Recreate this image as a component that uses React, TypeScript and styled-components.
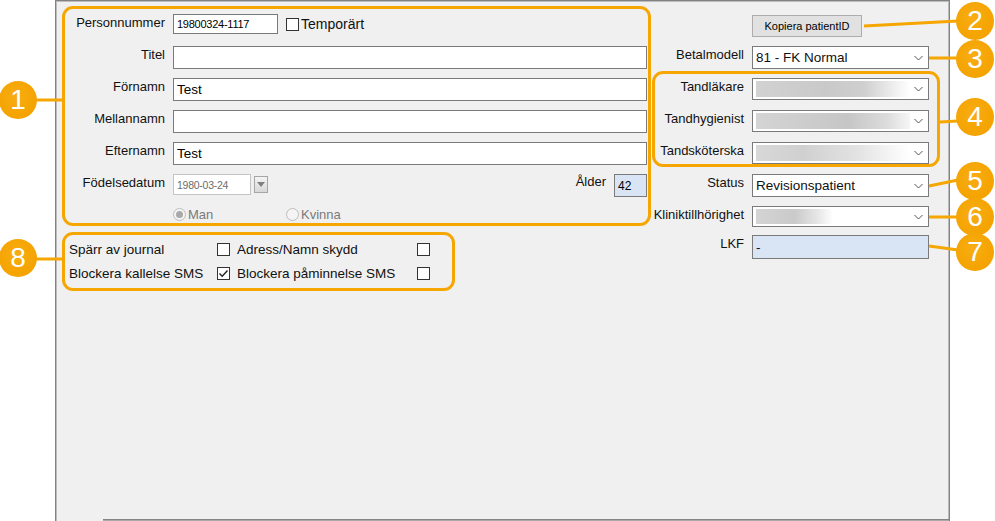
import React from "react";
import styled, { createGlobalStyle } from "styled-components";

/* ─── Global ─────────────────────────────────────────── */
const GlobalStyle = createGlobalStyle`
  html, body { margin: 0; padding: 0; background: #fff; }
  body {
    font-family: "Liberation Sans", Arial, sans-serif;
    color: #111;
  }
  * { box-sizing: border-box; }
`;

const ORANGE = "#f6a600";

/* ─── Layout ─────────────────────────────────────────── */
const Page = styled.div`
  position: relative;
  width: 995px;
  height: 521px;
  overflow: hidden;
  padding-left: 55px;
`;

const Panel = styled.div`
  width: 895px;
  height: 521px;
  display: flex;
  flex-direction: column;
  background: #f0f0f0;
  border: 1px solid #828282;
  border-bottom: none;
  box-shadow: inset 1px 1px 0 #bcbcbc, inset -1px 0 0 #bcbcbc;
  padding: 5px 0 0 6px;
`;

const Columns = styled.div`
  display: flex;
  align-items: flex-start;
`;

const Spacer = styled.div`
  flex: 1;
`;

const BottomEdge = styled.div`
  height: 2px;
  margin-left: 41px;
  background: #858585;
  border-bottom: 1px solid #a8a8a8;
`;

const LeftCol = styled.div`
  width: 589px;
  display: flex;
  flex-direction: column;
  gap: 6px;
`;

const RightCol = styled.div`
  width: 298px;
  display: flex;
  flex-direction: column;
`;

/* ─── Orange groups ──────────────────────────────────── */
const Group = styled.div`
  border: 3px solid ${ORANGE};
  border-radius: 11px;
`;

const PersonGroup = styled(Group)`
  height: 220px;
  display: grid;
  grid-template-columns: 100px 1fr;
  grid-template-rows: repeat(6, 23px) 16px;
  column-gap: 8px;
  row-gap: 9px;
  padding: 5px 1px 1px 0;
`;

const FlagGroup = styled(Group)`
  width: 393px;
  height: 59px;
  display: grid;
  grid-template-columns: 141px 13px 173px 13px;
  grid-template-rows: 17px 17px;
  column-gap: 7px;
  row-gap: 7px;
  align-items: center;
  padding: 6px 0 0 4px;
  font-size: 13.5px;
  line-height: 17px;
`;

const StaffGroup = styled(Group)`
  margin: 2px 9px 0 1px;
  padding-top: 4px;
  display: flex;
  flex-direction: column;
  gap: 10px;
  height: 96px;
`;

/* ─── Fields ─────────────────────────────────────────── */
const Label = styled.div`
  display: flex;
  justify-content: flex-end;
  white-space: nowrap;
  font-size: 13px;
  line-height: 16px;
  padding-top: 1px;
`;

const FieldRow = styled.div`
  display: flex;
  align-items: flex-start;
  gap: 8px;
`;

const TextBox = styled.div<{ $w?: number; $h?: number; $bg?: string; $size?: number; $muted?: boolean }>`
  width: ${(p) => (p.$w ? `${p.$w}px` : "100%")};
  height: ${(p) => p.$h ?? 23}px;
  display: flex;
  align-items: center;
  padding-left: 3px;
  background: ${(p) => p.$bg ?? "#fff"};
  border: 1px solid ${(p) => (p.$muted ? "#c4c4c4" : "#7a7a7a")};
  color: ${(p) => (p.$muted ? "#6d6d6d" : "#000")};
  font-size: ${(p) => p.$size ?? 13.5}px;
  letter-spacing: ${(p) => ((p.$size ?? 13.5) < 12 ? "-0.25px" : "0")};
  white-space: nowrap;
`;

const CheckBox = styled.div`
  width: 13px;
  height: 13px;
  flex: none;
  background: #fff;
  border: 1px solid #333;
  display: flex;
  align-items: center;
  justify-content: center;
`;

const CheckLabel = styled.span<{ $size?: number }>`
  font-size: ${(p) => p.$size ?? 13.5}px;
  white-space: nowrap;
`;

const InlineRow = styled.div<{ $h: number }>`
  height: ${(p) => p.$h}px;
  display: flex;
  align-items: center;
`;

const DateButton = styled.div`
  width: 14px;
  height: 17px;
  margin: 2px 0 0 3px;
  border: 1px solid #a6a6a6;
  background: linear-gradient(#f4f4f4, #d8d8d8);
  display: flex;
  align-items: center;
  justify-content: center;

  &::after {
    content: "";
    border-left: 4px solid transparent;
    border-right: 4px solid transparent;
    border-top: 5px solid #808080;
  }
`;

const AgeWrap = styled.div`
  margin-left: auto;
  display: flex;
  gap: 8px;
  align-items: flex-start;
  font-size: 13px;
  line-height: 16px;
`;

const RadioGroup = styled.div`
  display: grid;
  grid-template-columns: 113px auto;
  align-items: center;
`;

const RadioOption = styled.div`
  display: flex;
  align-items: center;
  gap: 2px;
  color: #7a7a7a;
  font-size: 13px;
`;

const RadioDot = styled.div<{ $on?: boolean }>`
  width: 13px;
  height: 13px;
  border-radius: 50%;
  border: 1px solid #bdbdbd;
  background: #f4f4f4;
  display: flex;
  align-items: center;
  justify-content: center;

  &::after {
    content: "";
    width: 7px;
    height: 7px;
    border-radius: 50%;
    background: ${(p) => (p.$on ? "#a9a9a9" : "transparent")};
  }
`;

/* ─── Right column ───────────────────────────────────── */
const FormRow = styled.div<{ $mt?: number; $pr?: number; $h?: number }>`
  display: grid;
  grid-template-columns: minmax(0, 1fr) 177px;
  column-gap: 8px;
  margin-top: ${(p) => p.$mt ?? 0}px;
  padding-right: ${(p) => p.$pr ?? 20}px;
  height: ${(p) => p.$h ?? 23}px;
`;

const CopyButton = styled.button`
  width: 110px;
  height: 22px;
  padding: 0;
  border: 1px solid #adadad;
  background: #e1e1e1;
  font-family: inherit;
  font-size: 11px;
  color: #000;
`;

const Select = styled.div<{ $bg?: string }>`
  height: 100%;
  display: flex;
  align-items: center;
  padding-left: 3px;
  background: ${(p) => p.$bg ?? "#fff"};
  border: 1px solid #7a7a7a;
  font-size: 13.5px;
  white-space: nowrap;
`;

const SelectValue = styled.span`
  flex: 1;
`;

const Blurred = styled.div<{ $fade: string }>`
  flex: 1;
  align-self: stretch;
  margin: 2px 4px 2px 0;
  background: ${(p) => p.$fade};
`;

const Chevron = () => (
  <svg width="9" height="6" viewBox="0 0 9 6" style={{ marginRight: 5, flex: "none" }}>
    <path d="M0.5 1 L4.5 5 L8.5 1" fill="none" stroke="#555" strokeWidth="1" />
  </svg>
);

const Tick = () => (
  <svg width="11" height="11" viewBox="0 0 11 11">
    <path d="M1.5 5.5 L4.2 8.2 L9.5 2.5" fill="none" stroke="#222" strokeWidth="1.4" />
  </svg>
);

/* ─── Callouts ───────────────────────────────────────── */
const Overlay = styled.svg`
  position: absolute;
  left: 0;
  top: 0;
  pointer-events: none;
`;

const Badge = styled.div<{ $x: number; $y: number }>`
  position: absolute;
  left: ${(p) => p.$x - 19}px;
  top: ${(p) => p.$y - 19}px;
  width: 38px;
  height: 38px;
  border-radius: 50%;
  background: radial-gradient(circle at 45% 40%, #f8ad12 0%, #f4a300 70%, #ee9c00 100%);
  color: #fff;
  font-size: 28px;
  line-height: 1;
  display: flex;
  align-items: center;
  justify-content: center;
`;

const leaders = [
  [36, 100, 62, 100],
  [36, 259, 62, 259],
  [864, 26, 958, 21],
  [929, 58, 958, 58],
  [940, 122, 958, 121],
  [929, 186, 958, 180],
  [929, 217, 958, 217],
  [929, 246, 958, 250],
];

const badges = [
  { n: 1, x: 18, y: 100 },
  { n: 8, x: 18, y: 258 },
  { n: 2, x: 975, y: 21 },
  { n: 3, x: 975, y: 59 },
  { n: 4, x: 975, y: 117 },
  { n: 5, x: 975, y: 181 },
  { n: 6, x: 975, y: 217 },
  { n: 7, x: 975, y: 252 },
];

const staff = [
  { label: "Tandläkare", fade: "linear-gradient(90deg, #d2d2d2 0%, #c9c9c9 45%, #cfcfcf 70%, #fff 100%)" },
  { label: "Tandhygienist", fade: "linear-gradient(90deg, #d4d4d4 0%, #cbcbcb 40%, #c6c6c6 60%, #dcdcdc 85%, #f6f6f6 100%)" },
  { label: "Tandsköterska", fade: "linear-gradient(90deg, #d8d8d8 0%, #d0d0d0 30%, #e2e2e2 65%, #fff 100%)" },
];

export default function App() {
  return (
    <Page>
      <GlobalStyle />
      <Panel>
        <Columns>
          <LeftCol>
            <PersonGroup>
              <Label>Personnummer</Label>
              <InlineRow $h={20}>
                <TextBox $w={105} $h={20} $size={11}>19800324-1117</TextBox>
                <CheckBox style={{ marginLeft: 8 }} />
                <CheckLabel $size={14} style={{ marginLeft: 2 }}>Temporärt</CheckLabel>
              </InlineRow>

              <Label>Titel</Label>
              <TextBox />

              <Label>Förnamn</Label>
              <TextBox>Test</TextBox>

              <Label>Mellannamn</Label>
              <TextBox />

              <Label>Efternamn</Label>
              <TextBox>Test</TextBox>

              <Label>Födelsedatum</Label>
              <FieldRow style={{ gap: 0 }}>
                <TextBox $w={78} $h={21} $size={10.5} $muted>1980-03-24</TextBox>
                <DateButton />
                <AgeWrap>
                  <span>Ålder</span>
                  <TextBox $w={33} $bg="#d9e5f5" $size={12}>42</TextBox>
                </AgeWrap>
              </FieldRow>

              <span />
              <RadioGroup>
                <RadioOption>
                  <RadioDot $on />
                  Man
                </RadioOption>
                <RadioOption>
                  <RadioDot />
                  Kvinna
                </RadioOption>
              </RadioGroup>
            </PersonGroup>

            <FlagGroup>
              <span>Spärr av journal</span>
              <CheckBox />
              <span>Adress/Namn skydd</span>
              <CheckBox />
              <span>Blockera kallelse SMS</span>
              <CheckBox>
                <Tick />
              </CheckBox>
              <span>Blockera påminnelse SMS</span>
              <CheckBox />
            </FlagGroup>
          </LeftCol>

          <RightCol>
            <FormRow $mt={9} $h={22}>
              <span />
              <CopyButton>Kopiera patientID</CopyButton>
            </FormRow>

            <FormRow $mt={9}>
              <Label>Betalmodell</Label>
              <Select>
                <SelectValue>81 - FK Normal</SelectValue>
                <Chevron />
              </Select>
            </FormRow>

            <StaffGroup>
              {staff.map((s) => (
                <FormRow key={s.label} $pr={8} $h={22}>
                  <Label>{s.label}</Label>
                  <Select>
                    <Blurred $fade={s.fade} />
                    <Chevron />
                  </Select>
                </FormRow>
              ))}
            </StaffGroup>

            <FormRow $mt={7}>
              <Label>Status</Label>
              <Select>
                <SelectValue>Revisionspatient</SelectValue>
                <Chevron />
              </Select>
            </FormRow>

            <FormRow $mt={9} $h={21}>
              <Label>Kliniktillhörighet</Label>
              <Select>
                <Blurred $fade="linear-gradient(90deg, #d4d4d4 0%, #cacaca 25%, #e6e6e6 40%, #fff 50%)" />
                <Chevron />
              </Select>
            </FormRow>

            <FormRow $mt={8} $h={24}>
              <Label>LKF</Label>
              <Select $bg="#d9e5f5">
                <SelectValue>-</SelectValue>
              </Select>
            </FormRow>
          </RightCol>
        </Columns>
        <Spacer />
        <BottomEdge />
      </Panel>

      <Overlay width="995" height="521" viewBox="0 0 995 521">
        {leaders.map(([x1, y1, x2, y2], i) => (
          <line key={i} x1={x1} y1={y1} x2={x2} y2={y2} stroke={ORANGE} strokeWidth="3" />
        ))}
      </Overlay>
      {badges.map((b) => (
        <Badge key={b.n} $x={b.x} $y={b.y}>
          {b.n}
        </Badge>
      ))}
    </Page>
  );
}
